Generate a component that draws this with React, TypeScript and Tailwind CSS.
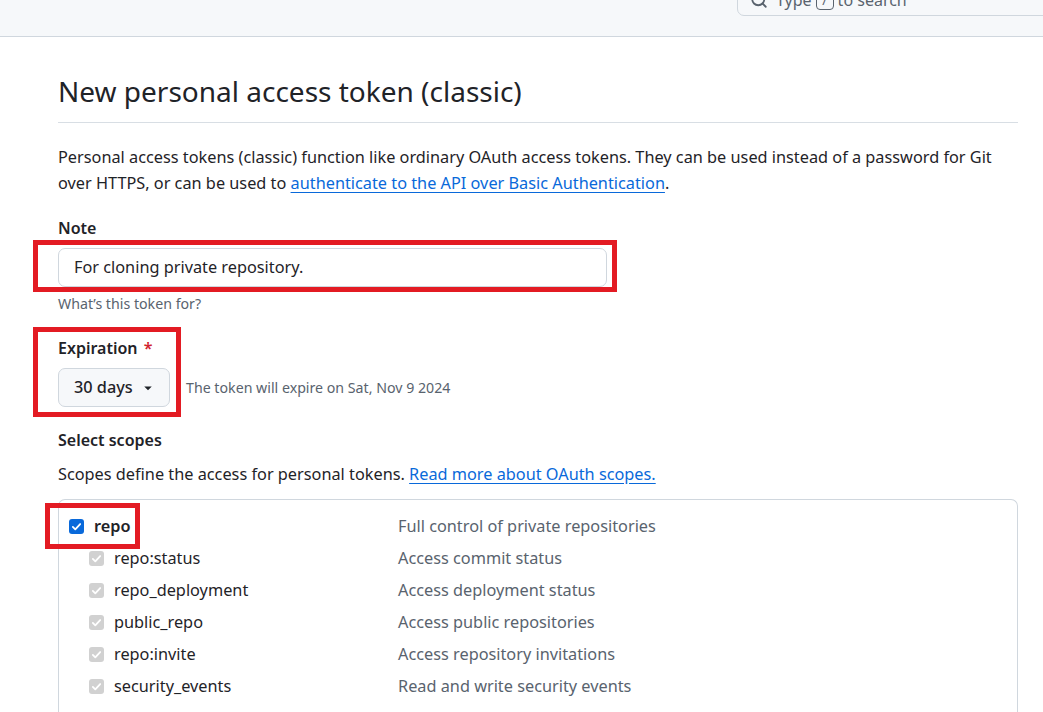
import React from "react";
import { Search } from "lucide-react";

const SUB_SCOPES = [
  { name: "repo:status", desc: "Access commit status" },
  { name: "repo_deployment", desc: "Access deployment status" },
  { name: "public_repo", desc: "Access public repositories" },
  { name: "repo:invite", desc: "Access repository invitations" },
  { name: "security_events", desc: "Read and write security events" },
];

function CheckMark({ className }: { className?: string }) {
  return (
    <svg viewBox="0 0 16 16" className={className} fill="none">
      <path d="M3.5 8.5l3 3 6-6.5" stroke="white" strokeWidth="2.2" strokeLinecap="round" strokeLinejoin="round" />
    </svg>
  );
}

export default function App() {
  return (
    <div
      className="h-[712px] w-[1043px] overflow-hidden bg-white text-[#1f2328]"
      style={{ fontFamily: '"Segoe UI", "Noto Sans", "Open Sans", sans-serif' }}
    >
      {/* Top bar */}
      <div className="h-[37px] bg-[#f6f8fa] border-b border-[#d0d7de] flex justify-end overflow-hidden">
        <div className="-mt-[16px] ml-auto w-[340px] h-[32px] mr-[-34px] rounded-[7px] border border-[#d0d7de] bg-[#f6f8fa] flex items-center gap-2 pl-3 text-[#59636e] text-[16px]">
          <Search size={18} strokeWidth={2.4} />
          <span className="flex items-center gap-1">
            Type
            <span className="inline-flex items-center justify-center w-[18px] h-[20px] border border-[#59636e] rounded-[4px] text-[13px] leading-none">/</span>
            to search
          </span>
        </div>
      </div>

      <div className="pl-[58px] pr-[25px]">
        {/* Heading */}
        <div className="pt-[36px] pb-[13px] border-b border-[#d8dee4]">
          <h1 className="text-[28px] leading-[36px] font-normal">New personal access token (classic)</h1>
        </div>

        <p className="mt-[21px] text-[16.3px] leading-[26px]">
          Personal access tokens (classic) function like ordinary OAuth access tokens. They can be used instead of a password for Git
          over HTTPS, or can be used to{" "}
          <a className="text-[#0969da] underline underline-offset-[3px]">authenticate to the API over Basic Authentication</a>.
        </p>

        {/* Note */}
        <div className="mt-[20px] text-[16px] font-semibold leading-[24px]">Note</div>
        <div className="-ml-[25px] w-[584px] border-[5px] border-[#e31b23] pl-[20px] pr-[5px] pt-[3px]">
          <div className="h-[39px] rounded-[7px] border border-[#d0d7de] flex items-center px-[15px] text-[16.3px]">
            For cloning private repository.
          </div>
        </div>
        <div className="mt-[1px] text-[14.2px] leading-[22px] text-[#59636e]">What’s this token for?</div>

        {/* Expiration */}
        <div className="flex items-end mt-[12px]">
          <div className="-ml-[25px] w-[148px] border-[5px] border-[#e31b23] pl-[20px] pt-[4px] pb-[5px]">
            <div className="text-[16px] font-semibold leading-[24px]">
              Expiration <span className="text-[#d1242f] ml-[2px]">*</span>
            </div>
            <div className="mt-[8px] h-[39px] w-[112px] rounded-[7px] border border-[#d0d7de] bg-[#f6f8fa] flex items-center pl-[15px] gap-[9px] text-[16.3px] font-medium">
              30 days
              <svg viewBox="0 0 16 16" className="w-[12px] h-[12px]">
                <path d="M3 6l5 5 5-5z" fill="#1f2328" />
              </svg>
            </div>
          </div>
          <div className="ml-[5px] mb-[18px] text-[14.2px] leading-[22px] text-[#59636e]">The token will expire on Sat, Nov 9 2024</div>
        </div>

        {/* Scopes */}
        <div className="mt-[11px] text-[16px] font-semibold leading-[24px]">Select scopes</div>
        <p className="mt-[9px] text-[16.3px] leading-[26px]">
          Scopes define the access for personal tokens.{" "}
          <a className="text-[#0969da] underline underline-offset-[3px]">Read more about OAuth scopes.</a>
        </p>

        <div className="mt-[12px] rounded-t-[7px] border border-b-0 border-[#d0d7de] h-[240px]">
          <div className="grid grid-cols-[339px_1fr] items-start h-[42px] text-[16.3px]">
            <div className="-ml-[14px] mt-[3px] w-[95px] h-[46px] border-[5px] border-[#e31b23] flex items-center pl-[19px] gap-[10px]">
              <span className="w-[15px] h-[15px] rounded-[3px] bg-[#0969da] flex items-center justify-center">
                <CheckMark className="w-[13px] h-[13px]" />
              </span>
              <span className="font-semibold">repo</span>
            </div>
            <div className="mt-[3px] h-[46px] flex items-center text-[#59636e]">Full control of private repositories</div>
          </div>
          {SUB_SCOPES.map((s) => (
            <div key={s.name} className="grid grid-cols-[339px_1fr] items-center h-[32px] text-[16.3px]">
              <div className="flex items-center pl-[30px] gap-[10px]">
                <span className="w-[15px] h-[15px] rounded-[3px] bg-[#d1d1d1] flex items-center justify-center">
                  <CheckMark className="w-[13px] h-[13px]" />
                </span>
                <span>{s.name}</span>
              </div>
              <div className="text-[#59636e]">{s.desc}</div>
            </div>
          ))}
        </div>
      </div>
    </div>
  );
}
